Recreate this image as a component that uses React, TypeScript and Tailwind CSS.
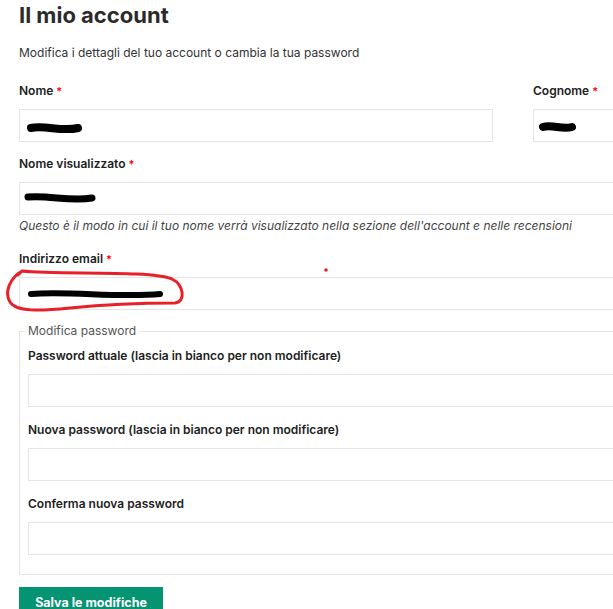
import React from "react";

function Req() {
  return <span className="text-[#ff0000] ml-[3px] text-[11px] align-top">*</span>;
}

function Field({ label, required, className = "" }: { label: string; required?: boolean; className?: string }) {
  return (
    <div className={className}>
      <label className="block text-[12px] leading-[18px] font-semibold text-[#222]">
        {label}
        {required && <Req />}
      </label>
      <input className="mt-[9px] block w-full h-[33px] border border-[#e4e4e4] bg-white outline-none" />
    </div>
  );
}

export default function App() {
  return (
    <div
      className="relative w-[613px] h-[609px] overflow-hidden bg-white text-[#333]"
      style={{ fontFamily: "Inter, 'Noto Sans', sans-serif" }}
    >
      <div className="w-[1007px] pl-[19px]">
        <h1 className="text-[22px] leading-[30px] font-bold text-[#2b2b2b]">Il mio account</h1>
        <p className="mt-[14px] text-[12px] leading-[18px] text-[#333]">
          Modifica i dettagli del tuo account o cambia la tua password
        </p>

        <form className="mt-[20px]">
          <div className="grid grid-cols-2 gap-x-10">
            <Field label="Nome" required />
            <Field label="Cognome" required />
          </div>

          <Field label="Nome visualizzato" required className="mt-[13px]" />
          <p className="mt-[2px] text-[12px] leading-[18px] italic text-[#444]">
            Questo è il modo in cui il tuo nome verrà visualizzato nella sezione dell'account e nelle recensioni
          </p>

          <Field label="Indirizzo email" required className="mt-[15px]" />

          <fieldset className="mt-[12px] border border-[#e4e4e4] px-2 pb-[19px]">
            <legend className="-ml-[3px] px-[3px] text-[12px] leading-[18px] text-[#555]">Modifica password</legend>
            <Field label="Password attuale (lascia in bianco per non modificare)" className="mt-[7px]" />
            <Field label="Nuova password (lascia in bianco per non modificare)" className="mt-[14px]" />
            <Field label="Conferma nuova password" className="mt-[14px]" />
          </fieldset>

          <button
            type="button"
            className="mt-[12px] block w-[144px] bg-[#049471] text-white text-[12.5px] font-bold pt-[9px] pb-px leading-[14px]"
          >
            Salva le modifiche
          </button>
        </form>
      </div>

      {/* redactions and annotation drawn over the screenshot */}
      <svg className="absolute inset-0 pointer-events-none" width="613" height="609" viewBox="0 0 613 609">
        <g stroke="#000" strokeLinecap="round" fill="none">
          <path d="M31 128 C45 125, 62 132, 78 128" strokeWidth="8" />
          <path d="M543 127 C552 124, 562 130, 572 127" strokeWidth="8" />
          <path d="M28 197 C50 195, 70 202, 92 198" strokeWidth="7" />
          <path d="M31 294 C70 291, 120 298, 160 294" strokeWidth="6" />
        </g>
        <path
          d="M22 271 C10 278, 4 292, 10 302 C16 312, 40 311, 70 308 C100 305, 130 303, 175 303 C186 302, 184 285, 172 279 C150 270, 60 275, 22 271 L18 275"
          stroke="#e8202a"
          strokeWidth="3"
          fill="none"
          strokeLinecap="round"
        />
        <circle cx="326" cy="270" r="1.8" fill="#e8202a" />
      </svg>
    </div>
  );
}
